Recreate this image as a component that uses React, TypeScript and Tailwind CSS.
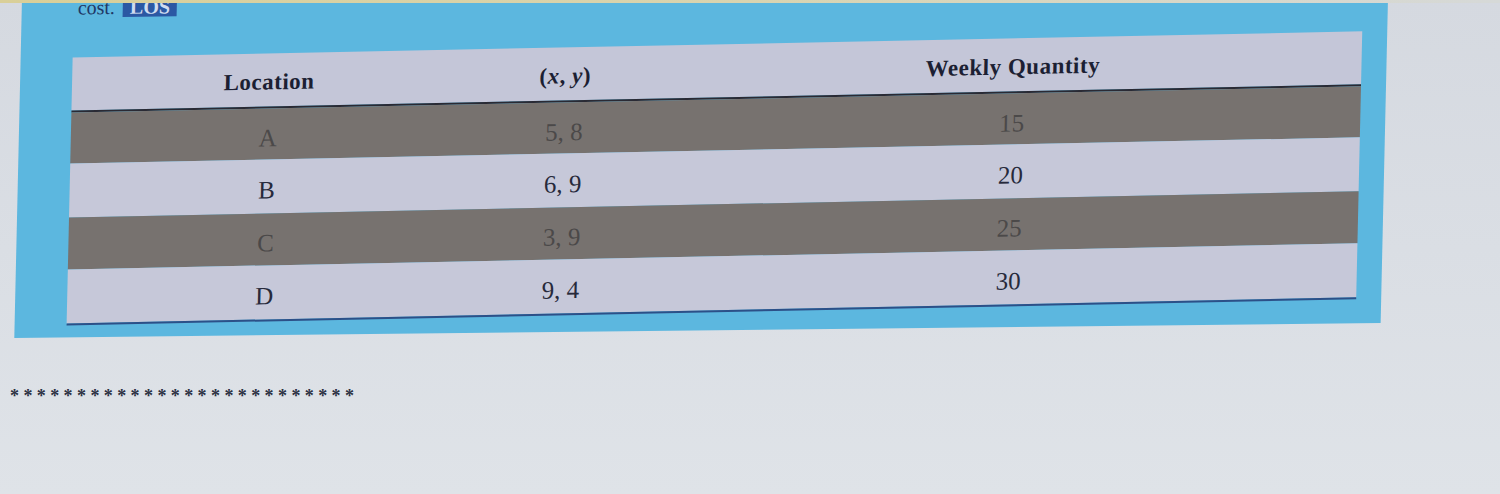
import React from "react";

const rows = [
  { loc: "A", xy: "5, 8", qty: "15", dark: true, h: "h-[51px]" },
  { loc: "B", xy: "6, 9", qty: "20", dark: false, h: "h-[54px]" },
  { loc: "C", xy: "3, 9", qty: "25", dark: true, h: "h-[52px]" },
  { loc: "D", xy: "9, 4", qty: "30", dark: false, h: "h-[54px]" },
];

export default function App() {
  return (
    <div
      className="w-[1500px] h-[494px] overflow-hidden bg-gradient-to-b from-[#d5d9e0] to-[#dfe3e8]"
      style={{ fontFamily: '"Liberation Serif", "Times New Roman", serif' }}
    >
      <div className="relative z-10 h-[3px] bg-gradient-to-r from-[#d9cf98] via-[#d9d4b0] to-[#d6d9d8]" />
      {/* blue question panel, photographed at a slight angle */}
      <div className="ml-[22px] w-[1366px] h-[340px] -mt-[3px] bg-[#5cb7df] pl-[52px] pr-[25px] origin-top-left -skew-x-[1.3deg] -skew-y-[0.63deg]">
        <div className="-mt-[5px] h-[20px] flex items-center gap-[8px] pl-[4px] text-[20px] leading-none text-[#213766]">
          <span>cost.</span>
          <span className="bg-[#2b58a3] text-[#cfdcf0] px-[7px] h-[20px] flex items-center font-bold">LOS</span>
        </div>
        <div className="mt-[40px] origin-top-left -skew-y-[0.53deg]">
          <div className="grid grid-cols-[394px_198px_1fr] h-[53px] bg-[#c4c6d8] pt-[5px] items-center text-center text-[23px] font-bold tracking-[0.5px] text-[#1c1f33]">
            <div>Location</div>
            <div>
              (<i>x</i>, <i>y</i>)
            </div>
            <div>Weekly Quantity</div>
          </div>
          <div className="h-[2px] bg-[#2a2a34]" />
          {rows.map((r) => (
            <div
              key={r.loc}
              className={`grid grid-cols-[394px_198px_1fr] items-center pt-[8px] text-center text-[25px] ${r.h} ${
                r.dark
                  ? "bg-[#77726f] text-[#4b4949]"
                  : "bg-[#c6c8d9] text-[#272a3b]"
              }`}
            >
              <div>{r.loc}</div>
              <div>{r.xy}</div>
              <div>{r.qty}</div>
            </div>
          ))}
          <div className="h-[2px] bg-[#2c5088]" />
        </div>
      </div>
      <div className="mt-[45px] pl-[10px] text-[18px] font-bold tracking-[4.4px] text-[#2b3042]">
        **************************
      </div>
    </div>
  );
}
